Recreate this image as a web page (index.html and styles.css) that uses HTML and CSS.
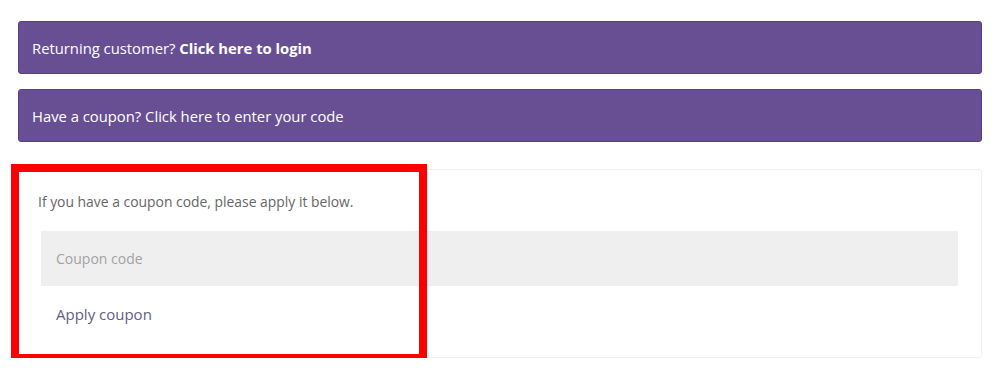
FILE: index.html
```html
<!DOCTYPE html>
<html>
<head>
<meta charset="utf-8">
<link rel="stylesheet" href="styles.css">
</head>
<body>
<div class="page">
  <div class="notice">Returning customer? <a class="notice-link strong">Click here to login</a></div>
  <div class="notice">Have a coupon? <a class="notice-link">Click here to enter your code</a></div>
  <form class="coupon">
    <p class="coupon-text">If you have a coupon code, please apply it below.</p>
    <input class="coupon-input" type="text" placeholder="Coupon code">
    <button class="coupon-btn" type="button">Apply coupon</button>
    <div class="highlight"></div>
  </form>
</div>
</body>
</html>
```
FILE: styles.css
```css
* { box-sizing: border-box; }
html, body { margin: 0; padding: 0; background: #fff; }
body { font-family: "Open Sans", "Liberation Sans", sans-serif; }
.page {
  padding: 21px 18px 0 18px;
  display: flex;
  flex-direction: column;
}
.notice {
  height: 53px;
  background: #684f94;
  border: 1px solid #583d8a;
  border-radius: 3px;
  color: #fff;
  font-size: 14.8px;
  display: flex;
  align-items: center;
  padding: 0 13px;
  margin-bottom: 15px;
  white-space: pre;
}
.notice-link { color: #fff; text-decoration: none; }
.notice-link.strong { font-weight: 700; }
.coupon {
  position: relative;
  margin-top: 12px;
  height: 189px;
  border: 1px solid #efefef;
  border-radius: 3px;
  padding: 0 23px 0 19px;
  display: flex;
  flex-direction: column;
}
.coupon-text {
  margin: 22px 0 0 0;
  font-size: 13.9px;
  color: #666;
  line-height: 20px;
}
.coupon-input {
  margin: 19px 0 0 3px;
  height: 55px;
  border: 0;
  background: #efefef;
  font-family: inherit;
  font-size: 14px;
  padding: 0 15px;
  color: #666;
  outline: none;
}
.coupon-input::placeholder { color: #a2a2a2; }
.coupon-btn {
  align-self: flex-start;
  margin: 14px 0 0 3px;
  padding: 4px 15px;
  background: transparent;
  border: 0;
  font-family: inherit;
  font-size: 15px;
  color: #625d86;
  cursor: pointer;
}
.highlight {
  position: absolute;
  left: -8px;
  top: -6px;
  width: 416px;
  height: 198px;
  border: 8.5px solid #ff0000;
  pointer-events: none;
}
```
